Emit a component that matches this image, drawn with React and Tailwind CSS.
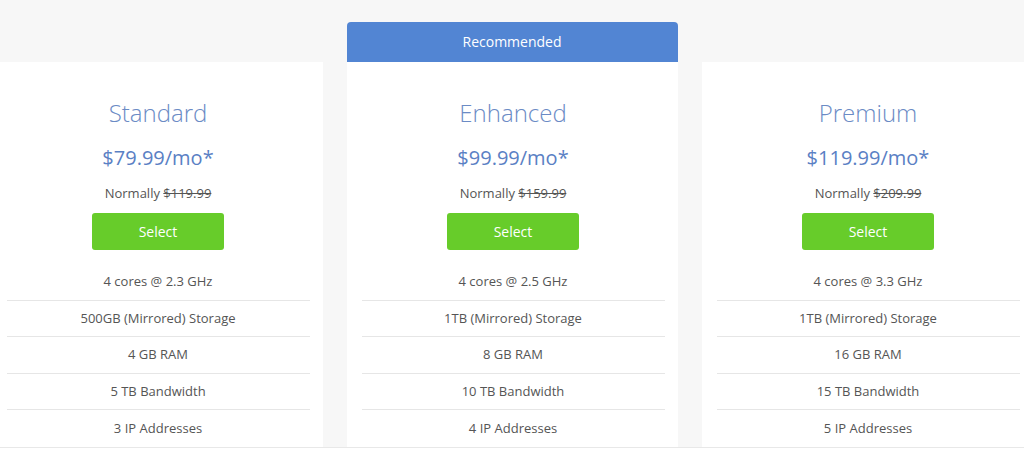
import React from "react";

const plans = [
  {
    name: "Standard",
    price: "$79.99/mo*",
    normal: "$119.99",
    features: ["4 cores @ 2.3 GHz", "500GB (Mirrored) Storage", "4 GB RAM", "5 TB Bandwidth", "3 IP Addresses"],
  },
  {
    name: "Enhanced",
    price: "$99.99/mo*",
    normal: "$159.99",
    recommended: true,
    features: ["4 cores @ 2.5 GHz", "1TB (Mirrored) Storage", "8 GB RAM", "10 TB Bandwidth", "4 IP Addresses"],
  },
  {
    name: "Premium",
    price: "$119.99/mo*",
    normal: "$209.99",
    features: ["4 cores @ 3.3 GHz", "1TB (Mirrored) Storage", "16 GB RAM", "15 TB Bandwidth", "5 IP Addresses"],
  },
];

function Card({ plan }) {
  return (
    <div className="flex w-[331px] shrink-0 flex-col">
      <div
        className={
          plan.recommended
            ? "flex h-[40px] items-center justify-center rounded-t-[4px] bg-[#5285d3] pb-[1px] text-[14px] text-white"
            : "h-[40px]"
        }
      >
        {plan.recommended ? "Recommended" : null}
      </div>
      <div className="flex h-[385px] flex-col items-center bg-white pl-[15px] pr-[13px] pt-[35px]">
        <div className="text-[24px] font-light leading-[32px] text-[#6b8bc5]">{plan.name}</div>
        <div className="mt-[16px] text-[20px] leading-[26px] text-[#5a80c4]">{plan.price}</div>
        <div className="mt-[13px] text-[13px] leading-[18px] text-[#555]">
          Normally <span className="line-through">{plan.normal}</span>
        </div>
        <button className="mt-[11px] h-[37px] w-[132px] shrink-0 rounded-[3px] bg-[#67cc2a] text-[14px] text-white">
          Select
        </button>
        <ul className="mt-[14px] w-full">
          {plan.features.map((f, i) => (
            <li
              key={i}
              className={
                "flex h-[36.5px] items-center justify-center text-[13px] text-[#555] " +
                (i < plan.features.length - 1 ? "border-b border-[#e6e6e6]" : "")
              }
            >
              {f}
            </li>
          ))}
        </ul>
      </div>
    </div>
  );
}

export default function App() {
  return (
    <div
      className="h-[464px] w-[1024px] overflow-hidden bg-[#f7f7f7]"
      style={{ fontFamily: '"Open Sans", "Liberation Sans", sans-serif' }}
    >
      <div className="flex justify-center gap-[24px] pt-[22px]">
        {plans.map((p) => (
          <Card key={p.name} plan={p} />
        ))}
      </div>
      <div className="h-[40px] border-t border-[#e8e8e8] bg-white" />
    </div>
  );
}
